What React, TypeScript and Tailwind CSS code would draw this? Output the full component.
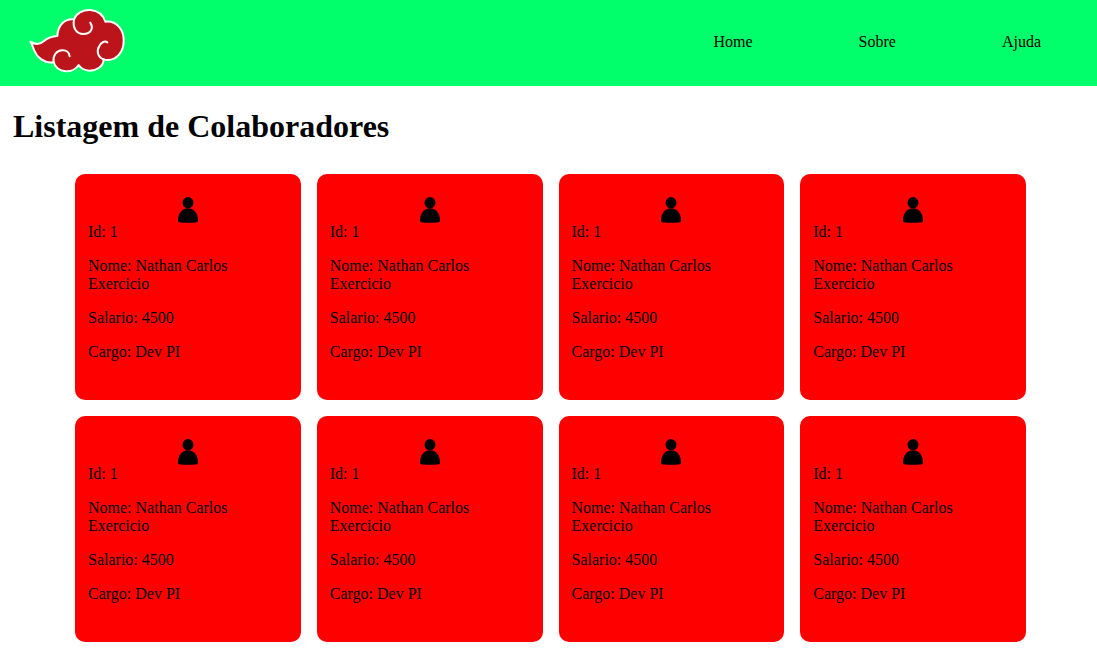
const links = ["Home", "Sobre", "Ajuda"];

const employees = Array.from({ length: 8 }, (_, index) => ({
  key: index,
  id: 1,
  name: "Nathan Carlos Exercicio",
  salary: 4500,
  role: "Dev PI",
}));

function CloudLogo() {
  return (
    <svg viewBox="27 24 291 195" className="h-[65px] w-[97px]" role="img" aria-label="Logo">
      <g stroke="#ffffff" strokeWidth="6" strokeLinecap="round" strokeLinejoin="round">
        <path
          fill="#bb141a"
          d="M31 125C46 135 58 135 71 124C83 113 94 109 112 108C113 76 134 55 162 58C168 40 188 29 211 30C234 32 250 46 256 65C290 61 312 90 311 122C311 156 290 181 262 180C258 180 254 179 251 178C250 200 230 212 208 212C193 211 182 204 176 195C168 207 152 215 137 214C118 212 105 201 101 187C70 191 50 170 42 150C38 140 37 132 31 125Z"
        />
        <path
          fill="none"
          d="M162 58C157 85 170 102 190 102C212 102 222 86 211 68M251 178C233 173 229 152 238 138C244 126 255 122 262 127M101 187C98 167 108 152 126 151C140 150 148 158 149 169"
        />
      </g>
    </svg>
  );
}

function PersonIcon() {
  return (
    <svg viewBox="0 0 60 78" className="h-[26px] w-5" fill="#000000" aria-hidden="true">
      <ellipse cx="30" cy="17" rx="16.5" ry="17" />
      <path d="M0 70C0 50 12 34 30 34C48 34 60 50 60 70Q60 75 57 76Q30 79 3 76Q0 75 0 70Z" />
    </svg>
  );
}

export default function App() {
  return (
    <div className="bg-white font-['Liberation_Serif','Times_New_Roman',serif] text-base leading-[18px] text-black">
      <header className="flex items-start justify-between bg-[#00ff6a] pt-2 pr-14 pb-[13px] pl-[29px]">
        <CloudLogo />
        <nav className="flex gap-[106px] pt-[25px]">
          {links.map((link) => (
            <a key={link} href="#">
              {link}
            </a>
          ))}
        </nav>
      </header>
      <main>
        <h1 className="px-[13px] pt-[22px] text-[32px] leading-9 font-bold">
          Listagem de Colaboradores
        </h1>
        <div className="grid grid-cols-4 gap-4 pt-[30px] pr-[71px] pl-[75px]">
          {employees.map((employee) => (
            <article
              key={employee.key}
              className="aspect-square rounded-[10px] bg-[#ff0000] px-[13px] pt-[23px]"
            >
              <div className="flex justify-center">
                <PersonIcon />
              </div>
              <div className="flex flex-col gap-4">
                <p>{`Id: ${employee.id}`}</p>
                <p>{`Nome: ${employee.name}`}</p>
                <p>{`Salario: ${employee.salary}`}</p>
                <p>{`Cargo: ${employee.role}`}</p>
              </div>
            </article>
          ))}
        </div>
      </main>
    </div>
  );
}
